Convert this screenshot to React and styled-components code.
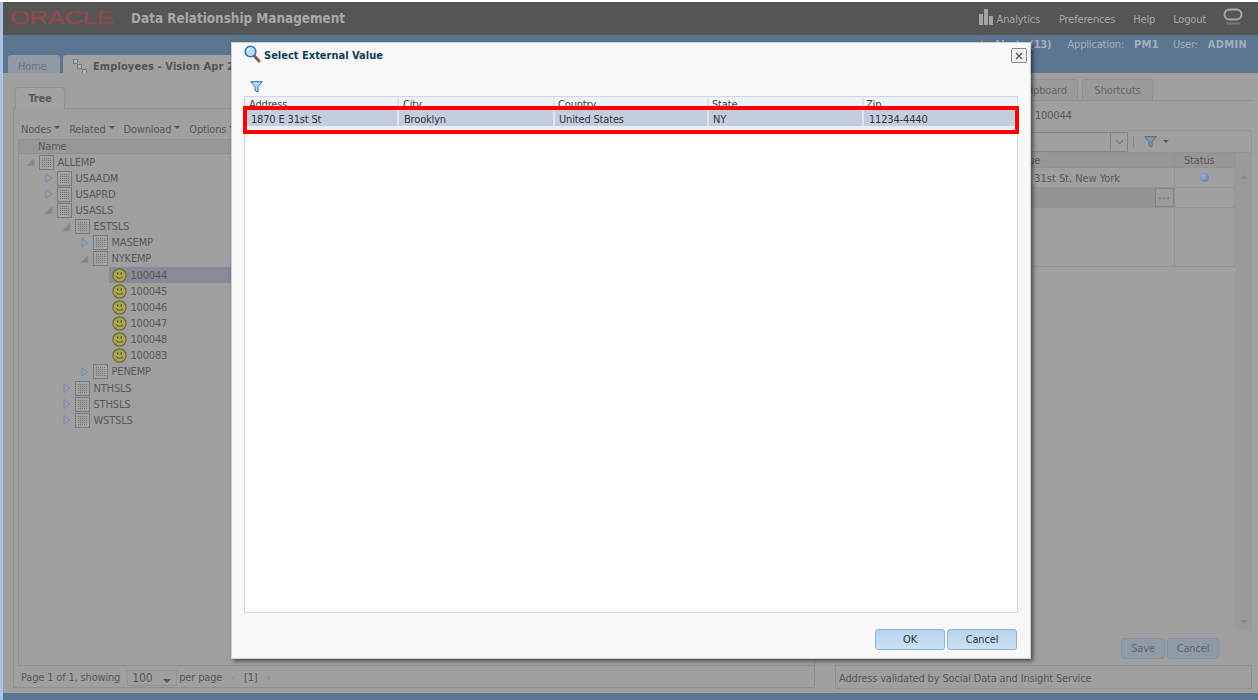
import styled, { createGlobalStyle } from "styled-components"

const Global = createGlobalStyle`
    html, body { margin: 0; padding: 0; background: #fff; }
    body { font-family: "DejaVu Sans Condensed", "DejaVu Sans", sans-serif; font-size: 11px; letter-spacing: -.17px; overflow: hidden; }
    * { box-sizing: border-box; }
`

const Page = styled.div`
    position: relative;
    height: 698px;
    margin-top: 2px;
    border-left: 3px solid #a9c3e2;
    display: flex;
    flex-direction: column;
    overflow: hidden;
    color: #595959;
`

// TOP BAR
const Header = styled.header`
    height: 33px;
    background: #555;
    display: flex;
    align-items: center;
    padding: 0 15px 0 7px;
    color: #a6a6a6;
`
const OracleLogo = styled.span`
    width: 121px;
    font: normal 18px "Liberation Sans", sans-serif;
    letter-spacing: 0;
    color: #8c4a4e;
    -webkit-text-stroke: .5px #8c4a4e;
    transform: scaleX(1.4);
    transform-origin: left;
    margin-top: -1px;
`
const AppTitle = styled.h1`
    margin: 0;
    font-size: 13.4px;
    font-weight: bold;
    letter-spacing: 0;
    color: #a8a8a8;
    flex: 1;
`
const TopLink = styled.a`
    margin-left: ${p => p.$gap}px;
    padding-top: 1px;
    display: flex;
    align-items: center;
    gap: 4px;
`

// BLUE BAND WITH DOCUMENT TABS
const Band = styled.div`
    height: 38px;
    background: #5c7590;
    display: flex;
    flex-direction: column;
    justify-content: space-between;
`
const BandInfo = styled.div`
    display: flex;
    justify-content: flex-end;
    align-items: center;
    gap: 10px;
    height: 18px;
    padding: 1px 11px 0 0;
    color: #a4afbb;
`
const BandLabel = styled.span`
    margin-left: ${p => p.$left || 0}px;
`
const BandValue = styled.b`
    margin-right: ${p => p.$right || 0}px;
    letter-spacing: .3px;
`
const DocTabs = styled.div`
    display: flex;
    gap: 3px;
    padding-left: 5px;
`
const DocTab = styled.div`
    height: 18px;
    padding: 4px 10px 0;
    display: flex;
    align-items: center;
    gap: 6px;
    border-radius: 3px 3px 0 0;
    background: ${p => (p.$active ? "#a0a0a0" : "#8f9aa5")};
    color: ${p => (p.$active ? "#555" : "#6e747b")};
    font-weight: ${p => (p.$active ? "bold" : "normal")};
    letter-spacing: ${p => (p.$active ? ".1px" : "-.17px")};
    width: ${p => p.$width}px;
    white-space: nowrap;
`
const BottomBand = styled.div`
    height: 7px;
    background: #5c7590;
`

// WORK AREA
const Workspace = styled.main`
    flex: 1;
    min-height: 0;
    background: #9f9f9f;
    display: flex;
    padding-left: 10px;
`
const LeftColumn = styled.section`
    width: 802px;
    padding: 13px 0 5px;
    display: flex;
    flex-direction: column;
`
const RightColumn = styled.section`
    width: 420px;
    margin-left: 17px;
    padding: 6px 0 4px;
    display: flex;
    flex-direction: column;
`
const TabStrip = styled.div`
    display: flex;
    gap: 4px;
    padding-left: ${p => p.$left || 2}px;
    height: ${p => p.$height}px;
`
const PanelTab = styled.div`
    width: ${p => p.$width}px;
    display: flex;
    align-items: center;
    justify-content: center;
    border: 1px solid #8f9090;
    border-bottom: 0;
    border-radius: 3px 3px 0 0;
    background: ${p => (p.$active ? "#a2a2a2" : "#9a9a9a")};
    font-weight: ${p => (p.$active ? "bold" : "normal")};
    color: ${p => (p.$active ? "#5a5a5a" : "#666")};
    position: relative;
    top: ${p => (p.$active ? 1 : 0)}px;
`
const TreePanel = styled.div`
    flex: 1;
    min-height: 0;
    border: 1px solid #8f9090;
    padding-left: 4px;
    display: flex;
    flex-direction: column;
`
const TreeToolbar = styled.div`
    height: 30px;
    padding: 14px 0 0 3px;
    display: flex;
    gap: 9px;
`
const MenuButton = styled.span`
    display: flex;
    gap: 3px;
    &::after {
        content: "";
        margin-top: 3px;
        border: 3px solid transparent;
        border-top-color: #555;
        border-bottom: 0;
        height: 0;
    }
`
const TreeTable = styled.div`
    flex: 1;
    min-height: 0;
    border-top: 1px solid #8f9090;
    border-left: 1px solid #8f9090;
`
const TreeHead = styled.div`
    height: 14px;
    background: #979797;
    border-bottom: 1px solid #8f9090;
    padding-left: 19px;
    line-height: 14px;
`
const TreeRow = styled.div`
    height: 16.15px;
    display: flex;
    align-items: center;
    padding-left: ${p => p.$indent}px;
`
const ArrowSlot = styled.span`
    width: 9px;
    height: 10px;
    margin: 0 4px 0 -1px;
    display: flex;
`
const NodeLabel = styled.span`
    margin-left: 3.5px;
`
const LeafCell = styled.span`
    display: flex;
    align-items: center;
    height: 16px;
    flex: 1;
    padding-left: 3px;
    background: ${p => (p.$selected ? "#878b97" : "transparent")};
`
const Pager = styled.div`
    height: 22px;
    border-top: 1px solid #8f9090;
    display: flex;
    align-items: center;
    gap: 4px;
    padding: 2px 0 0 3px;
`
const PageSize = styled.span`
    width: 50px;
    height: 16px;
    margin: 0 -2px 0 3px;
    border: 1px solid #939393;
    padding: 0 0 0 4px;
    display: flex;
    justify-content: space-between;
    font-size: 12px;
    line-height: 15px;
    &::after {
        content: "";
        margin: 8px 5px 0 0;
        border: 4px solid transparent;
        border-top-color: #555;
        border-bottom: 0;
        height: 0;
    }
`
const PageArrow = styled.span`
    color: #858585;
    margin: 0 5px;
`

// RIGHT SIDE
const DetailPanel = styled.div`
    flex: 1;
    min-height: 0;
    border-top: 1px solid #8f9090;
    padding-left: 3px;
    display: flex;
    flex-direction: column;
`
const NodeTitle = styled.div`
    height: 29px;
    padding: 8px 0 0 200px;
`
const PropToolbar = styled.div`
    height: 23px;
    border: 1px solid #949494;
    display: flex;
    align-items: center;
    padding-left: 180px;
`
const Combo = styled.div`
    width: 112px;
    height: 20px;
    border: 1px solid #838383;
    display: flex;
    justify-content: flex-end;
`
const ComboButton = styled.span`
    width: 17px;
    border-left: 1px solid #838383;
    display: flex;
    align-items: center;
    justify-content: center;
`
const ToolDivider = styled.span`
    width: 1px;
    height: 12px;
    background: #7f8e9c;
    margin: 0 10px 0 5px;
`
const ToolCaret = styled.span`
    margin-left: 6px;
    border: 3px solid transparent;
    border-top-color: #555;
    border-bottom: 0;
`
const PropGrid = styled.div`
    flex: 1;
    min-height: 0;
    display: grid;
    grid-template-columns: 160px 180px 60px 17px;
    grid-template-rows: 15px 20px 20px 59px 1fr;
`
const PropCell = styled.div`
    border-bottom: 1px solid #939393;
    border-right: 1px solid #939393;
    display: flex;
    align-items: center;
    justify-content: ${p => (p.$center ? "center" : "flex-start")};
    padding-left: ${p => p.$pad || 0}px;
    padding-top: ${p => (p.$drop ? 1 : 0)}px;
    letter-spacing: ${p => (p.$drop ? "-.05px" : "inherit")};
    white-space: nowrap;
    background: ${p => p.$bg || "transparent"};
`
const Scrollbar = styled.div`
    grid-column: 4;
    grid-row: 1 / 6;
    background: #9a9a9a;
    display: flex;
    flex-direction: column;
    justify-content: space-between;
    align-items: center;
    padding: 22px 0 7px;
`
const ScrollArrow = styled.span`
    border: 4px solid transparent;
    border-bottom-color: ${p => (p.$down ? "transparent" : "#888")};
    border-top-color: ${p => (p.$down ? "#888" : "transparent")};
    ${p => (p.$down ? "border-bottom: 0;" : "border-top: 0;")}
`
const MoreButton = styled.span`
    width: 19px;
    height: 19px;
    margin-left: auto;
    border: 1px solid #858585;
    text-align: center;
    line-height: 14px;
    letter-spacing: 1px;
    background: #9b9b9b;
`
const StatusDot = styled.span`
    width: 9px;
    height: 9px;
    border-radius: 50%;
    background: radial-gradient(circle at 40% 35%, #9bb0d0, #5470a3);
`
const PropFooter = styled.div`
    height: 35px;
    display: flex;
    justify-content: flex-end;
    align-items: center;
    gap: 2px;
    padding: 0 33px 0 0;
    border-bottom: 1px solid #8f9090;
`
const DimButton = styled.span`
    width: ${p => p.$width}px;
    height: 21px;
    border: 1px solid #84919e;
    border-radius: 3px;
    background: #8f9ba6;
    color: #666;
    display: flex;
    align-items: center;
    justify-content: center;
`
const StatusBar = styled.div`
    height: 23px;
    border: 1px solid #8f9090;
    border-top: 0;
    padding: 2px 0 0 3px;
    display: flex;
    align-items: center;
`

// DIALOG
const Dialog = styled.div`
    position: absolute;
    left: 228px;
    top: 40px;
    width: 800px;
    height: 617px;
    background: #f8f8f8;
    border: 1px solid #c2cfdc;
    box-shadow: 2px 2px 4px rgba(0, 0, 0, .55);
    padding: 0 12px;
    display: flex;
    flex-direction: column;
`
const DialogTitleBar = styled.div`
    height: 38px;
    display: flex;
    align-items: flex-start;
    padding-top: 2px;
`
const DialogTitle = styled.h2`
    margin: 4px 0 0 3px;
    font-size: 11px;
    font-weight: bold;
    letter-spacing: 0;
    color: #0f3c5a;
    flex: 1;
`
const CloseButton = styled.button`
    width: 16px;
    height: 15px;
    margin: 3px -9px 0 0;
    padding: 0;
    display: flex;
    align-items: center;
    justify-content: center;
    background: #f0f0f0;
    border: 1px solid #8a8a8a;
    border-radius: 2px;
`
const FilterRow = styled.div`
    height: 15px;
    padding-left: 6px;
`
const ValueTable = styled.div`
    flex: 1;
    min-height: 0;
    background: #fff;
    border: 1px solid #ccd8e5;
    position: relative;
`
const ValueRow = styled.div`
    display: grid;
    grid-template-columns: 154px 156px 154px 155px 1fr;
    height: ${p => p.$height}px;
    background: ${p => p.$bg};
    color: ${p => p.$color};
    border-bottom: ${p => p.$under || 0}px solid #e9edf5;
`
const ValueCell = styled.div`
    border-right: 2px solid ${p => p.$line};
    padding-left: ${p => p.$pad}px;
    white-space: nowrap;
    overflow: hidden;
    line-height: ${p => p.$lineHeight}px;
    &:last-child { border-right: 0; }
`
const RedMark = styled.div`
    position: absolute;
    left: -2px;
    right: -2px;
    top: 9px;
    height: 28px;
    border: 4px solid #f00;
`
const DialogFooter = styled.div`
    height: 45px;
    display: flex;
    justify-content: flex-end;
    gap: 2px;
    padding: 16px 1px 0 0;
`
const DialogButton = styled.button`
    width: 70px;
    height: 21px;
    padding: 0;
    border: 1px solid #8fb2d4;
    border-radius: 3px;
    background: linear-gradient(#b7d4ef, #cbe1f6);
    color: #333;
    font: inherit;
    letter-spacing: inherit;
`

// DRAWINGS
const Glyph = styled.svg`
    flex: none;
    margin-top: ${p => p.$top || 0}px;
    margin-right: ${p => p.$right || 0}px;
`

const Triangle = ({ open }) => open ? (
    <Glyph width="9" height="10" viewBox="0 0 9 10"><path d="M8 1.5V8.5H1Z" fill="#7d8790" stroke="#87909a" /></Glyph>
) : (
    <Glyph width="9" height="10" viewBox="0 0 9 10"><path d="M2 .8V9.2L7.5 5Z" fill="#9aa3ab" stroke="#6f8ba3" /></Glyph>
)

const GridIcon = () => (
    <Glyph width="15" height="15" viewBox="0 0 15 15">
        <rect x=".5" y=".5" width="14" height="14" fill="#a3a3a3" stroke="#7b7b7b" />
        {[3.5, 5.5, 7.5, 9.5, 11.5].map(y => <path key={y} d={`M3 ${y}H12`} stroke="#707070" strokeDasharray="1 1" />)}
    </Glyph>
)

const Smiley = () => (
    <Glyph width="15" height="15" viewBox="0 0 15 15">
        <circle cx="7.5" cy="7.5" r="6.6" fill="#a8a650" stroke="#6f6d35" strokeWidth="1.3" />
        <rect x="5" y="4.5" width="1.4" height="2" fill="#55532a" />
        <rect x="8.6" y="4.5" width="1.4" height="2" fill="#55532a" />
        <path d="M4 8.6Q7.5 12 11 8.6" fill="none" stroke="#55532a" />
    </Glyph>
)

const FilterIcon = ({ color = "#2d6fa8", fill = "#bcd6ec" }) => (
    <Glyph width="13" height="12" viewBox="0 0 13 12">
        <path d="M.7.7H12.3L8 5.6V11L5 9.6V5.6Z" fill={fill} stroke={color} strokeLinejoin="round" />
    </Glyph>
)

const Magnifier = () => (
    <Glyph width="17" height="18" viewBox="0 0 17 18">
        <path d="M9.5 10L15 16" stroke="#8a5a45" strokeWidth="3" strokeLinecap="round" />
        <circle cx="6.5" cy="6.5" r="5.3" fill="#b9def5" stroke="#2f78b8" strokeWidth="1.6" />
        <path d="M3.5 6A3 3 0 0 1 6 3.4" fill="none" stroke="#fff" strokeWidth="1.3" />
    </Glyph>
)

const BarsIcon = () => (
    <Glyph width="14" height="16" viewBox="0 0 14 16" $top={-4}>
        <path d="M0 5H4V16H0ZM5 0H9V16H5ZM10 7H14V16H10Z" fill="#a2a2a2" />
    </Glyph>
)

const OracleRing = () => (
    <Glyph width="20" height="19" viewBox="0 0 20 19" $top={-3}>
        <rect x="1.5" y="1.5" width="17" height="10" rx="5" fill="none" stroke="#a8a8a8" strokeWidth="2" />
        <path d="M4 15.5H16" stroke="#777" strokeWidth="2" strokeLinecap="round" />
    </Glyph>
)

const HierarchyIcon = () => (
    <Glyph width="14" height="15" viewBox="0 0 14 15">
        <path d="M3 3L7 7.5L11 12" stroke="#7d8790" fill="none" />
        <rect x=".5" y=".5" width="4" height="4" fill="#a9b4bf" stroke="#70808e" />
        <rect x="4.5" y="5.5" width="4" height="4" fill="#a9b4bf" stroke="#70808e" />
        <rect x="9.5" y="10.5" width="4" height="4" fill="#a9b4bf" stroke="#70808e" />
    </Glyph>
)

const AlertIcon = () => (
    <Glyph width="14" height="13" viewBox="0 0 14 13" $right={-5}>
        <path d="M7 1L13 12H1Z" fill="#a89a5c" stroke="#8c7f45" />
    </Glyph>
)

const tree = [
    { name: "ALLEMP", depth: 0, open: true },
    { name: "USAADM", depth: 1 },
    { name: "USAPRD", depth: 1 },
    { name: "USASLS", depth: 1, open: true },
    { name: "ESTSLS", depth: 2, open: true },
    { name: "MASEMP", depth: 3 },
    { name: "NYKEMP", depth: 3, open: true },
    { name: "100044", depth: 4, leaf: true, selected: true },
    { name: "100045", depth: 4, leaf: true },
    { name: "100046", depth: 4, leaf: true },
    { name: "100047", depth: 4, leaf: true },
    { name: "100048", depth: 4, leaf: true },
    { name: "100083", depth: 4, leaf: true },
    { name: "PENEMP", depth: 3 },
    { name: "NTHSLS", depth: 2 },
    { name: "STHSLS", depth: 2 },
    { name: "WSTSLS", depth: 2 },
]

const columns = ["Address", "City", "Country", "State", "Zip"]
const columnPads = [4, 4, 3, 3, 2]
const values = ["1870 E 31st St", "Brooklyn", "United States", "NY", "11234-4440"]
const valuePads = [6, 5, 4, 4, 5]

function App() {
    return (
        <>
            <Global />
            <Page>
                <Header>
                    <OracleLogo>ORACLE</OracleLogo>
                    <AppTitle>Data Relationship Management</AppTitle>
                    <TopLink $gap={0}><BarsIcon />Analytics</TopLink>
                    <TopLink $gap={19}>Preferences</TopLink>
                    <TopLink $gap={18}>Help</TopLink>
                    <TopLink $gap={18}>Logout</TopLink>
                    <TopLink $gap={17}><OracleRing /></TopLink>
                </Header>

                <Band>
                    <BandInfo>
                        <AlertIcon />
                        <b>Alerts (13)</b>
                        <BandLabel $left={6}>Application:</BandLabel>
                        <BandValue $right={4}>PM1</BandValue>
                        <BandLabel>User:</BandLabel>
                        <BandValue>ADMIN</BandValue>
                    </BandInfo>
                    <DocTabs>
                        <DocTab $width={52}>Home</DocTab>
                        <DocTab $active $width={400}><HierarchyIcon />Employees - Vision Apr 2014</DocTab>
                    </DocTabs>
                </Band>

                <Workspace>
                    <LeftColumn>
                        <TabStrip $height={22}>
                            <PanelTab $active $width={50}>Tree</PanelTab>
                        </TabStrip>
                        <TreePanel>
                            <TreeToolbar>
                                <MenuButton>Nodes</MenuButton>
                                <MenuButton>Related</MenuButton>
                                <MenuButton>Download</MenuButton>
                                <MenuButton>Options</MenuButton>
                            </TreeToolbar>
                            <TreeTable>
                                <TreeHead>Name</TreeHead>
                                {tree.map(node => (
                                    <TreeRow key={node.name} $indent={node.leaf ? 90 : 8 + node.depth * 18}>
                                        {node.leaf ? (
                                            <LeafCell $selected={node.selected}>
                                                <Smiley />
                                                <NodeLabel>{node.name}</NodeLabel>
                                            </LeafCell>
                                        ) : (
                                            <>
                                                <ArrowSlot><Triangle open={node.open} /></ArrowSlot>
                                                <GridIcon />
                                                <NodeLabel>{node.name}</NodeLabel>
                                            </>
                                        )}
                                    </TreeRow>
                                ))}
                            </TreeTable>
                            <Pager>
                                Page 1 of 1, showing
                                <PageSize>100</PageSize>
                                per page
                                <PageArrow>‹</PageArrow>
                                [1]
                                <PageArrow>›</PageArrow>
                            </Pager>
                        </TreePanel>
                    </LeftColumn>

                    <RightColumn>
                        <TabStrip $height={21} $left={178}>
                            <PanelTab $width={68}>Clipboard</PanelTab>
                            <PanelTab $width={71}>Shortcuts</PanelTab>
                        </TabStrip>
                        <DetailPanel>
                            <NodeTitle>100044</NodeTitle>
                            <PropToolbar>
                                <Combo>
                                    <ComboButton>
                                        <svg width="9" height="6" viewBox="0 0 9 6"><path d="M1 1L4.5 5L8 1" fill="none" stroke="#666" /></svg>
                                    </ComboButton>
                                </Combo>
                                <ToolDivider />
                                <FilterIcon color="#4f6a80" fill="#8595a3" />
                                <ToolCaret />
                            </PropToolbar>
                            <PropGrid>
                                <PropCell $bg="#979797">Property</PropCell>
                                <PropCell $bg="#979797" $pad={19}>Value</PropCell>
                                <PropCell $bg="#979797" $pad={9}>Status</PropCell>
                                <Scrollbar>
                                    <ScrollArrow />
                                    <ScrollArrow $down />
                                </Scrollbar>
                                <PropCell>Address</PropCell>
                                <PropCell $pad={2} $drop>1870 E 31st St, New York</PropCell>
                                <PropCell $center><StatusDot /></PropCell>
                                <PropCell />
                                <PropCell $bg="#949494"><MoreButton>...</MoreButton></PropCell>
                                <PropCell />
                                <PropCell />
                                <PropCell />
                                <PropCell />
                            </PropGrid>
                            <PropFooter>
                                <DimButton $width={44}>Save</DimButton>
                                <DimButton $width={52}>Cancel</DimButton>
                            </PropFooter>
                            <StatusBar>Address validated by Social Data and Insight Service</StatusBar>
                        </DetailPanel>
                    </RightColumn>
                </Workspace>

                <BottomBand />

                <Dialog>
                    <DialogTitleBar>
                        <Magnifier />
                        <DialogTitle>Select External Value</DialogTitle>
                        <CloseButton>
                            <svg width="8" height="8" viewBox="0 0 8 8"><path d="M1 1L7 7M7 1L1 7" stroke="#555" strokeWidth="1.3" /></svg>
                        </CloseButton>
                    </DialogTitleBar>
                    <FilterRow><FilterIcon /></FilterRow>
                    <ValueTable>
                        <ValueRow $height={13} $bg="#eff2fa" $color="#444">
                            {columns.map((col, i) => (
                                <ValueCell key={col} $line="#dde3ee" $pad={columnPads[i]} $lineHeight={16}>{col}</ValueCell>
                            ))}
                        </ValueRow>
                        <ValueRow $height={19} $under={3} $bg="#c3cde0" $color="#333">
                            {values.map((val, i) => (
                                <ValueCell key={val} $line="#dfe4ee" $pad={valuePads[i]} $lineHeight={19}>{val}</ValueCell>
                            ))}
                        </ValueRow>
                        <RedMark />
                    </ValueTable>
                    <DialogFooter>
                        <DialogButton>OK</DialogButton>
                        <DialogButton>Cancel</DialogButton>
                    </DialogFooter>
                </Dialog>
            </Page>
        </>
    )
}

export default App
